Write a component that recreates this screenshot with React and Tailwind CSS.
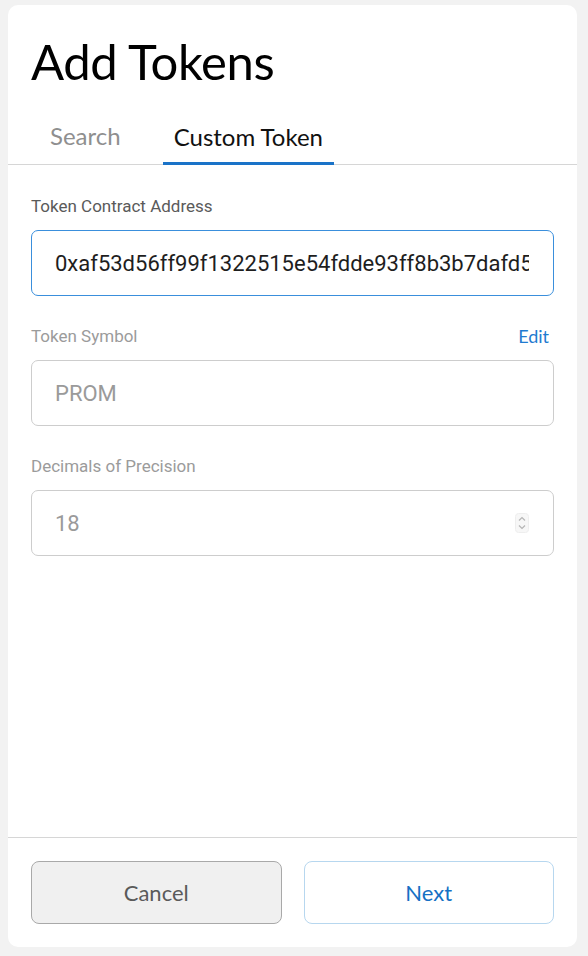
import React from "react";

const Label = ({ children, muted, right }) => (
  <div className="flex items-center justify-between h-[20px] mb-[14px] pr-[5px]">
    <span
      className={`text-[17px] leading-[20px] font-['Roboto',sans-serif] ${
        muted ? "text-[#9b9b9b]" : "text-[#5a5a5a]"
      }`}
    >
      {children}
    </span>
    {right}
  </div>
);

const App = () => {
  return (
    <div className="min-h-screen bg-[#f2f2f2] pl-[8px] pt-[5px] pb-[9px]">
      <div className="w-[569px] h-[942px] bg-white rounded-[10px] flex flex-col overflow-hidden">
        {/* header */}
        <div className="pl-[23px] pt-[27px]">
          <h1 className="text-[49px] leading-[58px] font-['Lato',sans-serif] text-black tracking-[-0.4px]">
            Add Tokens
          </h1>
        </div>
        <div className="flex items-end pl-[31px] mt-[32px] border-b border-[#d6d6d6] gap-[31px] font-['Lato',sans-serif]">
          <div className="px-[11px] pb-[14px] text-[24px] leading-[28px] text-[#8f8f8f]">Search</div>
          <div className="px-[11px] pb-[11px] text-[24px] leading-[28px] text-[#111] border-b-[3px] border-[#1a73c8] -mb-px">
            Custom Token
          </div>
        </div>

        {/* form */}
        <div className="flex-1 px-[23px] pt-[31px]">
          <Label>Token Contract Address</Label>
          <input
            readOnly
            value="0xaf53d56ff99f1322515e54fdde93ff8b3b7dafd5"
            className="w-full h-[66px] border border-[#3a8fdc] rounded-[7px] pl-[23px] pr-[24px] text-[22px] font-['Roboto',sans-serif] text-[#1e1e1e] outline-none"
          />

          <div className="mt-[30px]">
            <Label
              muted
              right={
                <span className="text-[18px] font-['Lato',sans-serif] text-[#1f7bd0]">Edit</span>
              }
            >
              Token Symbol
            </Label>
            <input
              readOnly
              value="PROM"
              className="w-full h-[66px] border border-[#cdcdcd] rounded-[7px] pl-[23px] text-[22px] font-['Roboto',sans-serif] text-[#9a9a9a] outline-none"
            />
          </div>

          <div className="mt-[30px]">
            <Label muted>Decimals of Precision</Label>
            <div className="h-[66px] border border-[#cdcdcd] rounded-[7px] flex items-center justify-between pl-[23px] pr-[24px]">
              <span className="text-[22px] font-['Roboto',sans-serif] text-[#9a9a9a]">18</span>
              <svg width="14" height="20" viewBox="0 0 14 20" className="text-[#b5b5b5]">
                <rect x="0.5" y="0.5" width="13" height="19" rx="3" fill="#f7f7f7" stroke="#eeeeee" />
                <path d="M4 7.5 L7 4.5 L10 7.5" fill="none" stroke="currentColor" strokeWidth="1.2" />
                <path d="M4 12.5 L7 15.5 L10 12.5" fill="none" stroke="currentColor" strokeWidth="1.2" />
              </svg>
            </div>
          </div>
        </div>

        {/* footer */}
        <div className="border-t border-[#d6d6d6] px-[23px] pt-[23px] pb-[23px] flex gap-[22px] font-['Lato',sans-serif]">
          <button className="flex-1 h-[63px] bg-[#f0f0f0] border border-[#a9a9a9] rounded-[8px] text-[22px] text-[#5a5a5a]">
            Cancel
          </button>
          <button className="flex-1 h-[63px] bg-white border border-[#b7d7ef] rounded-[8px] text-[22px] text-[#1670c4]">
            Next
          </button>
        </div>
      </div>
    </div>
  );
};

export default App;
